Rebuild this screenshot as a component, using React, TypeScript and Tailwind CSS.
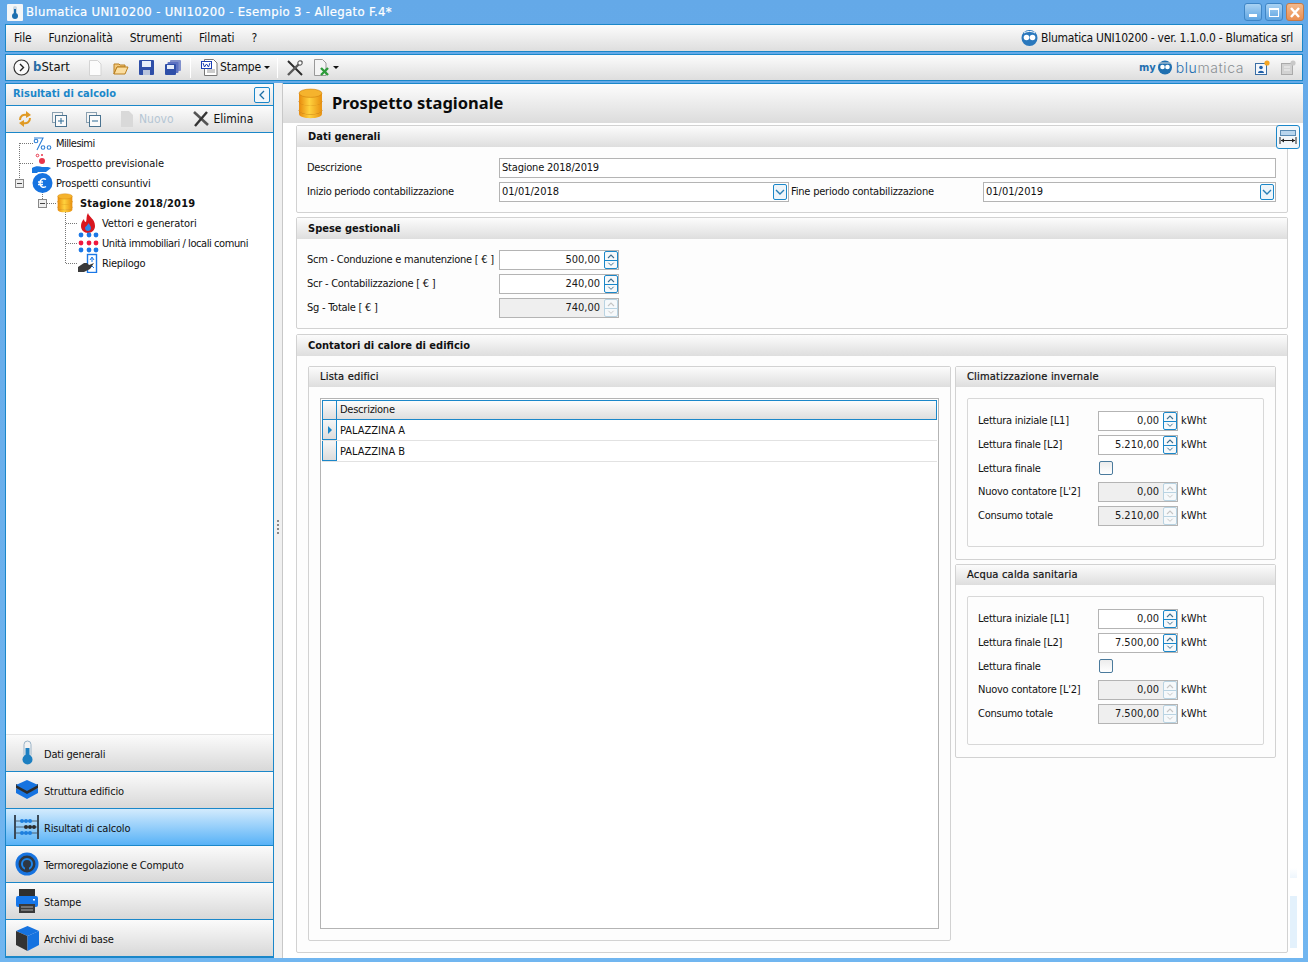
import type { ReactNode } from 'react'

const blue = '#1b87c9'

function Coins({ size = 24 }: { size?: number }) {
  return (
    <svg width={size} height={size * 1.25} viewBox="0 0 24 30">
      <defs>
        <linearGradient id="coin" x1="0" x2="1" y1="0" y2="0">
          <stop offset="0" stopColor="#e88a0c" />
          <stop offset="0.45" stopColor="#ffd23e" />
          <stop offset="1" stopColor="#e8900f" />
        </linearGradient>
      </defs>
      <path d="M1 22v3c0 2.500 5 4 11 4s11-1.500 11-4v-3z" fill="url(#coin)" />
      <ellipse cx="12" cy="21.500" rx="11" ry="3.500" fill="#fde39a" stroke="#b96f08" strokeWidth="0.800" />
      <path d="M1 13v8c0 2.500 5 4 11 4s11-1.500 11-4v-8z" fill="url(#coin)" />
      <ellipse cx="12" cy="13" rx="11" ry="3.500" fill="#fde39a" stroke="#b96f08" strokeWidth="0.800" />
      <path d="M1 5v8c0 2.500 5 4 11 4s11-1.500 11-4V5z" fill="url(#coin)" />
      <ellipse cx="12" cy="5" rx="11" ry="4" fill="#f5b32d" stroke="#c9780a" strokeWidth="0.500" />
    </svg>
  )
}

function Spinner({ disabled }: { disabled?: boolean }) {
  const c = disabled ? '#b9d3e2' : blue
  return (
    <div className="flex flex-col w-[14px] h-[18px] rounded-[2px] border bg-[#f6f9fb] shrink-0" style={{ borderColor: c }}>
      <svg viewBox="0 0 12 8" className="h-[8px] w-[12px]">
        <path d="M3 6l3-3 3 3" fill="none" stroke={disabled ? '#c5c5c5' : '#3f6f8f'} strokeWidth="1.100" />
      </svg>
      <div className="h-px" style={{ backgroundColor: c }} />
      <svg viewBox="0 0 12 8" className="h-[7px] w-[12px]">
        <path d="M3 2l3 3 3-3" fill="none" stroke={disabled ? '#c5c5c5' : '#3f6f8f'} strokeWidth="1.100" />
      </svg>
    </div>
  )
}

function NumField({ value, disabled, width }: { value: string; disabled?: boolean; width: string }) {
  return (
    <div className={`${width} h-[20px] border border-[#b4b4b4] flex items-center justify-end gap-[4px] ${disabled ? 'bg-[#efefef]' : 'bg-white'}`}>
      <span className="tracking-normal text-[#1a1a1a]">{value}</span>
      <Spinner disabled={disabled} />
    </div>
  )
}

function DateField({ value, width }: { value: string; width: string }) {
  return (
    <div className={`${width} h-[20px] border border-[#b4b4b4] bg-white flex items-center justify-between pl-[2px]`}>
      <span className="tracking-normal">{value}</span>
      <div className="w-[14px] h-[16px] mr-px border border-[#1b87c9] rounded-[2px] bg-[#eef5fa] flex items-center justify-center">
        <svg width="10" height="8" viewBox="0 0 10 8">
          <path d="M1 2l4 4 4-4" fill="none" stroke="#2a7fb6" strokeWidth="1.400" />
        </svg>
      </div>
    </div>
  )
}

function Section({ title, className, children }: { title: string; className: string; children: ReactNode }) {
  return (
    <div className={`border border-[#d2d2d2] rounded-[2px] bg-[#fdfdfd] flex flex-col ${className}`}>
      <div className="h-[21px] shrink-0 pl-[11px] flex items-center font-bold tracking-normal text-[#111] bg-[linear-gradient(#fcfcfc,#dedede)]">
        {title}
      </div>
      {children}
    </div>
  )
}

function SubSection({ title, className, children }: { title: string; className: string; children: ReactNode }) {
  return (
    <div className={`border border-[#d2d2d2] rounded-[2px] bg-[#fdfdfd] flex flex-col ${className}`}>
      <div className="h-[20px] shrink-0 pl-[11px] flex items-center font-medium tracking-[0.2px] text-[#111] [-webkit-text-stroke:0.2px_#111] bg-[linear-gradient(#fcfcfc,#dedede)]">
        {title}
      </div>
      {children}
    </div>
  )
}

function Meter({ rows }: { rows: { label: string; value?: string; disabled?: boolean }[] }) {
  return (
    <div className="mx-[11px] mt-[11px] h-[149px] border border-[#d8d8d8] rounded-[2px] pt-[12px] pl-[10px] flex flex-col gap-[4px]">
      {rows.map((r) => (
        <div key={r.label + r.value} className={`flex items-center ${r.value ? 'h-[20px]' : 'h-[19px]'}`}>
          <span className="w-[120px] shrink-0">{r.label}</span>
          {r.value ? (
            <>
              <NumField value={r.value} disabled={r.disabled} width="w-[80px]" />
              <span className="ml-[3px] tracking-normal">kWht</span>
            </>
          ) : (
            <div className="w-[14px] h-[14px] ml-px mb-[2px] border border-[#4a7a9c] rounded-[2px] bg-[linear-gradient(#ececec,#ffffff)]" />
          )}
        </div>
      ))}
    </div>
  )
}

function Tree() {
  const row = 'h-[20px] flex items-center'
  return (
    <div className="relative flex-1 bg-white pt-px">
      <svg className="absolute left-0 top-0" width="100" height="140" viewBox="6 133 100 140">
        <g stroke="#777" strokeDasharray="1 1" fill="none">
          <path d="M19.500 143V179M20 143.500H33M20 163.500H34M42.500 190V199M47 203.500H57M65.500 212V263M66 223.500H78M66 243.500H78M66 263.500H78" />
        </g>
        <g fill="#eee" stroke="#888">
          <rect x="15.500" y="179.500" width="8" height="8" />
          <rect x="38.500" y="199.500" width="8" height="8" />
        </g>
        <path d="M17 183.500h5M40 203.500h5" stroke="#444" />
        {/* per mille */}
        <g fill="none" stroke="#2c7fd6" strokeWidth="1.100">
          <path d="M34 138h9l-6 12" />
          <circle cx="36" cy="141" r="1.800" />
          <circle cx="43" cy="147.500" r="1.800" />
          <circle cx="49" cy="147.500" r="1.800" />
        </g>
        {/* prospetto previsionale */}
        <circle cx="37.500" cy="155.500" r="1.300" fill="none" stroke="#e8354a" />
        <circle cx="42" cy="155" r="1" fill="#e8354a" />
        <circle cx="42" cy="161" r="3" fill="#e8354a" />
        <path d="M32 168c3-2 7-2 10-1h6l3 1-5 4h-8l-1 1h-5z" fill="#1877e0" />
        {/* euro */}
        <circle cx="42.500" cy="183" r="10" fill="#1673e0" />
        <path d="M46 179.500c-3-2-6 0-6 3.500s3 5.500 6 3.500M38 182h5M38 184.500h5" fill="none" stroke="#fff" strokeWidth="1.400" />
        {/* flame */}
        <path d="M88 213c1 4 7 6 7 13 0 4-3 7-7 7s-7-3-7-7c0-3 1-5 3-7 0 2 1 3 2 3 1-3 0-6 2-9z" fill="#d8171f" />
        <path d="M88.500 223c1 2 2.500 3 2.500 5s-1.500 3-3 3-3-1-3-3c0-1 1-2 1.500-2 .500-1 1.500-1.500 2-3z" fill="#2f86e6" />
        {/* dots */}
        <g fill="#1b78e6">
          <circle cx="81" cy="235" r="2.400" /><circle cx="89" cy="235" r="2.400" /><circle cx="96" cy="235" r="2.400" />
          <circle cx="81" cy="250" r="2.400" /><circle cx="89" cy="250" r="2.400" /><circle cx="96" cy="250" r="2.400" />
        </g>
        <g fill="#f0173f">
          <circle cx="81" cy="243" r="2.400" /><circle cx="89" cy="243" r="2.400" /><circle cx="96" cy="243" r="2.400" />
        </g>
        {/* riepilogo */}
        <rect x="87.500" y="254.500" width="9" height="18" fill="#fff" stroke="#1b78e6" strokeWidth="1.400" />
        <path d="M90 260l2-3 2 3M92 258v4" stroke="#1b78e6" fill="none" />
        <path d="M90 268l2-2 2 2" stroke="#1b78e6" fill="none" />
        <path d="M78 272v-5l6-4h3l2 2 5-2-4 6-6 3z" fill="#3a3a3a" />
      </svg>
      <div className="relative flex flex-col">
        <div className={`${row} pl-[50px] tracking-[-0.5px]`}>Millesimi</div>
        <div className={`${row} pl-[50px] tracking-[-0.1px]`}>Prospetto previsionale</div>
        <div className={`${row} pl-[50px] tracking-[-0.15px]`}>Prospetti consuntivi</div>
        <div className={`${row} pl-[74px] font-bold tracking-[0.2px]`}>Stagione 2018/2019</div>
        <div className={`${row} pl-[96px] tracking-[-0.1px]`}>Vettori e generatori</div>
        <div className={`${row} pl-[96px] tracking-[-0.42px]`}>Unità immobiliari / locali comuni</div>
        <div className={`${row} pl-[96px] tracking-[-0.3px]`}>Riepilogo</div>
      </div>
      <div className="absolute left-[51px] top-[60px] w-[16px] h-[20px]">
        <Coins size={16} />
      </div>
    </div>
  )
}

const navIcons: Record<string, ReactNode> = {
  'Dati generali': (
    <svg width="24" height="26" viewBox="0 0 24 26">
      <rect x="9" y="1" width="7" height="17" rx="3.500" fill="#f2f2f2" stroke="#9bb4c8" />
      <circle cx="12.500" cy="19.500" r="5" fill="#1d7fc1" />
      <rect x="10.500" y="8" width="4" height="11" fill="#1d7fc1" />
    </svg>
  ),
  'Struttura edificio': (
    <svg width="24" height="22" viewBox="0 0 24 22">
      <path d="M12 14l11-5v5l-11 6-11-6V9z" fill="#1673e0" />
      <path d="M12 10l11-5v4l-11 6-11-6V5z" fill="#2b2b2b" />
      <path d="M12 1l11 5-11 6L1 6z" fill="#1673e0" />
    </svg>
  ),
  'Risultati di calcolo': (
    <svg width="26" height="25" viewBox="0 0 26 25">
      <rect x="0" y="0" width="2" height="24" fill="#3b4a58" />
      <rect x="23" y="0" width="2" height="24" fill="#3b4a58" />
      <path d="M2 6h21M2 12h21M2 18h21" stroke="#3b4a58" strokeWidth="0.800" />
      <g fill="#1d7fe0">
        <circle cx="8" cy="6" r="2" /><circle cx="12" cy="6" r="2" /><circle cx="16" cy="6" r="2" />
        <circle cx="8" cy="18" r="2" /><circle cx="12" cy="18" r="2" /><circle cx="16" cy="18" r="2" />
      </g>
      <g fill="#2b2b2b">
        <circle cx="12" cy="12" r="2" /><circle cx="16" cy="12" r="2" /><circle cx="20" cy="12" r="2" />
      </g>
    </svg>
  ),
  'Termoregolazione e Computo': (
    <svg width="24" height="24" viewBox="0 0 24 24">
      <circle cx="12" cy="12" r="11.500" fill="#1673e0" />
      <circle cx="12" cy="12" r="8.500" fill="#2e3742" />
      <circle cx="12" cy="12" r="5" fill="none" stroke="#1f86ea" strokeWidth="2" />
      <rect x="10" y="15" width="4" height="4" fill="#2e3742" />
    </svg>
  ),
  Stampe: (
    <svg width="24" height="24" viewBox="0 0 24 24">
      <rect x="4" y="0" width="16" height="8" fill="#2f2f2f" />
      <rect x="1" y="7" width="22" height="11" rx="2" fill="#1677ea" />
      <rect x="4" y="15" width="16" height="9" fill="#3a3a3a" />
      <path d="M6 18h12M6 21h12" stroke="#aaa" />
      <rect x="18" y="10" width="2" height="1.500" fill="#fff" />
    </svg>
  ),
  'Archivi di base': (
    <svg width="25" height="25" viewBox="0 0 25 25">
      <path d="M12.500 0l11.500 5-11.500 5L1 5z" fill="#1673e0" />
      <path d="M1 5l11.500 5v15L1 19z" fill="#333" />
      <path d="M24 5l-11.500 5v15L24 19z" fill="#1673e0" />
    </svg>
  ),
}

function NavButton({ label, active }: { label: string; active?: boolean }) {
  return (
    <div
      className={`h-[37px] shrink-0 border-b border-[#1b87c9] flex items-center ${
        active ? 'bg-[linear-gradient(#d3ebfd,#58b2f7)]' : 'bg-[linear-gradient(#fbfbfb,#d8d8d8)]'
      }`}
    >
      <div className="w-[38px] pl-[4px] flex justify-center shrink-0">{navIcons[label]}</div>
      <span className="pt-[3px] tracking-[-0.2px]">{label}</span>
    </div>
  )
}

function Sep() {
  return <div className="w-px h-[20px] bg-[#c4c4c4] border-r border-white" />
}

function Caret() {
  return <div className="w-0 h-0 border-x-[3px] border-x-transparent border-t-[3px] border-t-[#111]" />
}

function TopToolbar() {
  return (
    <div className="h-[27px] border border-[#1b87c9] flex items-center pl-[7px] pr-[6px] bg-[linear-gradient(#fcfcfc,#dedede)]">
      <svg width="17" height="17" viewBox="0 0 17 17" className="mr-[3px]">
        <circle cx="8.500" cy="8.500" r="7.500" fill="#fafafa" stroke="#333" strokeWidth="1.200" />
        <path d="M7 5l3.500 3.500L7 12" fill="none" stroke="#222" strokeWidth="1.400" />
      </svg>
      <span className="text-[13px] tracking-[0px] w-[55px] -mt-[2px]"><b className="text-[#2a6fa5]">b</b>Start</span>
      <svg width="14" height="16" viewBox="0 0 14 16" className="mr-[11px]">
        <path d="M1.500.500h8l3.500 3.500v11.500h-11.500z" fill="#fcfcfc" stroke="#d4d4d4" />
      </svg>
      <svg width="16" height="14" viewBox="0 0 16 14" className="mr-[10px]">
        <path d="M1 3h5l1 1h5v2H4L1 13z" fill="#f2c87c" stroke="#b97f1f" />
        <path d="M1 13l3-7h11l-3 7z" fill="#fbdd9f" stroke="#b97f1f" />
      </svg>
      <svg width="15" height="15" viewBox="0 0 15 15" className="mr-[11px]">
        <rect x="0" y="0" width="15" height="15" rx="1" fill="#2f4fa8" />
        <rect x="3" y="1" width="9" height="6" fill="#e7eefa" />
        <rect x="4" y="10" width="7" height="5" fill="#b9c4dc" />
      </svg>
      <svg width="16" height="15" viewBox="0 0 16 15" className="mr-[9px]">
        <rect x="5" y="0" width="11" height="11" rx="1" fill="#8090cc" />
        <rect x="2.500" y="2" width="11" height="11" rx="1" fill="#5d72c2" />
        <rect x="0" y="4" width="11" height="11" rx="1" fill="#2f4fa8" />
        <rect x="2" y="5" width="7" height="4" fill="#e7eefa" />
      </svg>
      <Sep />
      <svg width="17" height="17" viewBox="0 0 17 17" className="ml-[10px] mr-[2px]">
        <path d="M3.500.500h9l3.500 3.500v12.500h-12.500z" fill="#fff" stroke="#777" />
        <path d="M6 11h8M6 13h8" stroke="#999" />
        <rect x="0" y="2" width="11" height="8" fill="#1c3fb4" />
        <rect x="1" y="3" width="9" height="6" fill="#fff" />
        <path d="M2 4l1.500 4 2-3 2 3L9 4" fill="none" stroke="#1c3fb4" />
      </svg>
      <span className="mr-[3px] text-[12px] tracking-[-0.1px] -mt-[2px]">Stampe</span>
      <Caret />
      <div className="w-[7px]" />
      <Sep />
      <svg width="16" height="16" viewBox="0 0 16 16" className="ml-[9px] mr-[10px]">
        <path d="M1 1l14 14" stroke="#2c2c2c" strokeWidth="2" />
        <path d="M15 1L1 15" stroke="#5a5a5a" strokeWidth="2.400" />
        <circle cx="13" cy="3" r="2.200" fill="#fff" stroke="#444" />
      </svg>
      <svg width="18" height="18" viewBox="0 0 18 18" className="mr-[2px]">
        <path d="M1.500.500h8l3.500 3.500v12.500h-11.500z" fill="#f4f4f4" stroke="#999" />
        <path d="M8 9l7 7M15 9l-7 7" stroke="#2d9b3a" strokeWidth="2.400" />
      </svg>
      <Caret />
      <div className="ml-auto flex items-center">
        <span className="font-bold tracking-normal text-[#1f6fb0] text-[11px] mr-[2px]">my</span>
        <svg width="14" height="15" viewBox="0 0 14 15" className="mr-[4px]">
          <circle cx="7" cy="7.500" r="7" fill="#1f6fb0" />
          <circle cx="4.500" cy="7" r="2.300" fill="#fff" />
          <circle cx="9.500" cy="7" r="2.300" fill="#fff" />
          <path d="M0 3h14" stroke="#dcdcdc" />
        </svg>
        <span className="font-['Inter',sans-serif] font-light text-[14px] leading-none tracking-[0.6px] mr-[11px] [font-stretch:normal]">
          <span className="text-[#1f6fb0]">blu</span>
          <span className="text-[#8a8f94]">matica</span>
        </span>
        <svg width="15" height="16" viewBox="0 0 15 16" className="mr-[11px]">
          <rect x="0.500" y="3.500" width="11" height="11" fill="#f4f7fb" stroke="#3a6ea5" />
          <circle cx="6" cy="7.500" r="1.800" fill="#1f5fa8" />
          <path d="M3 13c0-3 6-3 6 0z" fill="#1f5fa8" />
          <circle cx="12" cy="3" r="2.600" fill="#f5a623" />
        </svg>
        <svg width="15" height="16" viewBox="0 0 15 16">
          <rect x="0.500" y="3.500" width="11" height="11" fill="#d2d2d2" stroke="#aaa" />
          <path d="M3 7h6M3 10h6" stroke="#f2f2f2" />
          <circle cx="12" cy="3" r="2.600" fill="#c8c8c8" />
        </svg>
      </div>
    </div>
  )
}

export default function App() {
  const climaRows = (l2: string, tot: string) => [
    { label: 'Lettura iniziale [L1]', value: '0,00' },
    { label: 'Lettura finale [L2]', value: l2 },
    { label: 'Lettura finale' },
    { label: "Nuovo contatore [L'2]", value: '0,00', disabled: true },
    { label: 'Consumo totale', value: tot, disabled: true },
  ]

  return (
    <div className="relative w-[1308px] h-[962px] overflow-hidden flex flex-col whitespace-nowrap bg-[linear-gradient(#64a9e8,#71b6f0)] font-['DejaVu_Sans',sans-serif] [font-stretch:condensed] text-[11px] leading-[14px] tracking-[-0.25px] text-[#111]">
      {/* title bar */}
      <div className="h-[24px] shrink-0 flex items-center pl-[7px] pr-[4px]">
        <svg width="16" height="17" viewBox="0 0 16 17" className="mr-[3px]">
          <rect width="16" height="17" rx="1" fill="#f4f6f8" />
          <rect x="6" y="2" width="4" height="9" rx="2" fill="#cbd7e2" />
          <circle cx="8" cy="12" r="3" fill="#1d6fb0" />
          <rect x="7" y="5" width="2" height="6" fill="#1d6fb0" />
        </svg>
        <span className="text-white text-[13px] font-medium tracking-[0.32px] [-webkit-text-stroke:0.2px_#fff]">
          Blumatica UNI10200 - UNI10200 - Esempio 3 - Allegato F.4*
        </span>
        <div className="ml-auto flex gap-[3px]">
          <div className="w-[18px] h-[18px] rounded-[3px] border border-[#3f86c6] bg-[linear-gradient(#a9d2f3,#5fa5e2)] flex items-end justify-center pb-[3px]">
            <div className="w-[8px] h-[3px] bg-white" />
          </div>
          <div className="w-[18px] h-[18px] rounded-[3px] border border-[#3f86c6] bg-[linear-gradient(#a9d2f3,#5fa5e2)] flex items-center justify-center">
            <div className="w-[10px] h-[9px] border border-white border-t-[2px]" />
          </div>
          <div className="w-[18px] h-[18px] rounded-[3px] border border-[#c77a45] bg-[linear-gradient(#f3b98c,#ea8f52)] flex items-center justify-center">
            <svg width="12" height="11" viewBox="0 0 12 11">
              <path d="M2 1l8 9M10 1l-8 9" stroke="#fff" strokeWidth="2.400" />
            </svg>
          </div>
        </div>
      </div>

      <div className="flex-1 min-h-0 flex flex-col gap-[2px] px-[5px] pb-[4px]">
        {/* menu */}
        <div className="h-[28px] shrink-0 border border-[#1b87c9] flex items-center pl-[8px] pr-[9px] text-[12px] bg-[linear-gradient(#fcfcfc,#dedede)]">
          <span className="mr-[17px] tracking-[-0.1px]">File</span>
          <span className="mr-[17px] tracking-[-0.05px]">Funzionalità</span>
          <span className="mr-[17px] tracking-[-0.15px]">Strumenti</span>
          <span className="mr-[17px] tracking-[-0.05px]">Filmati</span>
          <span>?</span>
          <div className="ml-auto flex items-center gap-[3px]">
            <svg width="17" height="16" viewBox="0 0 17 16">
              <circle cx="8.500" cy="8" r="8" fill="#2a78bd" />
              <circle cx="5.500" cy="7.500" r="2.800" fill="#fff" />
              <circle cx="11.500" cy="7.500" r="2.800" fill="#fff" />
              <path d="M3 3c3-2 8-2 11 0" stroke="#fff" fill="none" />
            </svg>
            <span>Blumatica UNI10200 - ver. 1.1.0.0 - Blumatica srl</span>
          </div>
        </div>

        <TopToolbar />

        <div className="flex-1 min-h-0 flex">
          {/* left panel */}
          <div className="w-[269px] shrink-0 border border-[#1b87c9] bg-white flex flex-col">
            <div className="h-[21px] shrink-0 flex items-center justify-between pl-[7px] pr-[3px] font-bold text-[#1b87c9] bg-[linear-gradient(#fcfcfc,#e4e4e4)]">
              <span className="text-[11px] tracking-normal -mt-[1px]">Risultati di calcolo</span>
              <div className="w-[16px] h-[16px] border border-[#1b87c9] rounded-[2px] bg-[#f2f7fb] flex items-center justify-center">
                <svg width="8" height="10" viewBox="0 0 8 10">
                  <path d="M6 1L2 5l4 4" fill="none" stroke="#1b6ea5" strokeWidth="1.300" />
                </svg>
              </div>
            </div>
            <div className="h-[28px] shrink-0 border-y border-[#1b87c9] flex items-center pl-[11px] bg-[linear-gradient(#fcfcfc,#e0e0e0)]">
              <svg width="16" height="16" viewBox="0 0 16 16" className="mr-[19px]">
                <g fill="none" stroke="#e09a24" strokeWidth="2">
                  <path d="M3 9c0-4 3-6 7-5" />
                  <path d="M13 7c0 4-3 6-7 5" />
                </g>
                <path d="M9 0l5 4-5 3zM7 16L2 12l5-3z" fill="#e09a24" />
              </svg>
              <svg width="15" height="15" viewBox="0 0 15 15" className="mr-[19px]">
                <rect x="0.500" y="0.500" width="10" height="10" fill="#f4f4f4" stroke="#8aa0b0" />
                <rect x="3.500" y="3.500" width="11" height="11" fill="#fafafa" stroke="#4a7390" />
                <path d="M6 9h6M9 6v6" stroke="#2c6a95" />
              </svg>
              <svg width="15" height="15" viewBox="0 0 15 15" className="mr-[19px]">
                <rect x="0.500" y="0.500" width="10" height="10" fill="#f4f4f4" stroke="#8aa0b0" />
                <rect x="3.500" y="3.500" width="11" height="11" fill="#fafafa" stroke="#4a7390" />
                <path d="M6 9h6" stroke="#2c6a95" />
              </svg>
              <svg width="14" height="16" viewBox="0 0 14 16" className="mr-[5px]">
                <path d="M1 0h8l4 4v12H1z" fill="#d9d9d9" />
              </svg>
              <span className="text-[12px] text-[#b5c6d4] mr-[19px] tracking-normal">Nuovo</span>
              <svg width="16" height="16" viewBox="0 0 16 16" className="mr-[5px]">
                <path d="M1 1l14 13" stroke="#555" strokeWidth="2.600" />
                <path d="M14 1L2 15" stroke="#333" strokeWidth="2.400" />
              </svg>
              <span className="text-[12px] tracking-normal">Elimina</span>
            </div>
            <Tree />
            <div className="border-t border-[#e4e4e4]">
              <NavButton label="Dati generali" />
              <NavButton label="Struttura edificio" />
              <NavButton label="Risultati di calcolo" active />
              <NavButton label="Termoregolazione e Computo" />
              <NavButton label="Stampe" />
              <NavButton label="Archivi di base" />
            </div>
          </div>

          {/* splitter */}
          <div className="w-[9px] shrink-0 bg-[#f0f0f0] border-r border-[#c8c8c8] flex items-center justify-center">
            <div className="flex flex-col gap-[2px] mt-[12px]">
              <div className="w-[2px] h-[2px] bg-[#888]" />
              <div className="w-[2px] h-[2px] bg-[#888]" />
              <div className="w-[2px] h-[2px] bg-[#888]" />
              <div className="w-[2px] h-[2px] bg-[#888]" />
            </div>
          </div>

          {/* content */}
          <div className="relative flex-1 min-w-0 bg-white flex flex-col">
            <div className="h-[40px] shrink-0 border-t border-[#1b87c9] bg-[linear-gradient(#fcfcfc,#dcdcdc)] flex items-center pl-[15px] gap-[9px]">
              <Coins size={25} />
              <span className="text-[16.500px] leading-[20px] -mt-[2px] tracking-normal font-bold text-[#0b0b0b] font-['Noto_Sans',sans-serif]">Prospetto stagionale</span>
            </div>

            <div className="flex-1 min-h-0 pl-[13px] pr-[15px] pt-[2px] flex flex-col gap-[4px] pb-[5px]">
              <Section title="Dati generali" className="h-[88px] shrink-0">
                <div className="pt-[11px] pl-[10px] pr-[11px] flex flex-col gap-[4px]">
                  <div className="flex items-center">
                    <span className="w-[192px] shrink-0">Descrizione</span>
                    <div className="flex-1 h-[20px] border border-[#b4b4b4] bg-white flex items-center pl-[2px] tracking-[-0.2px]">Stagione 2018/2019</div>
                  </div>
                  <div className="flex items-center">
                    <span className="w-[192px] shrink-0">Inizio periodo contabilizzazione</span>
                    <DateField value="01/01/2018" width="w-[290px]" />
                    <span className="w-[194px] shrink-0 pl-[2px] tracking-[-0.2px]">Fine periodo contabilizzazione</span>
                    <DateField value="01/01/2019" width="flex-1" />
                  </div>
                </div>
              </Section>

              <Section title="Spese gestionali" className="h-[112px] shrink-0">
                <div className="pt-[11px] pl-[10px] flex flex-col gap-[4px]">
                  <div className="flex items-center">
                    <span className="w-[192px] shrink-0">Scm - Conduzione e manutenzione [ € ]</span>
                    <NumField value="500,00" width="w-[120px]" />
                  </div>
                  <div className="flex items-center">
                    <span className="w-[192px] shrink-0">Scr - Contabilizzazione [ € ]</span>
                    <NumField value="240,00" width="w-[120px]" />
                  </div>
                  <div className="flex items-center">
                    <span className="w-[192px] shrink-0">Sg - Totale [ € ]</span>
                    <NumField value="740,00" disabled width="w-[120px]" />
                  </div>
                </div>
              </Section>

              <Section title="Contatori di calore di edificio" className="flex-1 min-h-0 mt-[1px]">
                <div className="flex-1 min-h-0 flex gap-[4px] pt-[10px] pl-[11px] pr-[11px] pb-[11px]">
                  <SubSection title="Lista edifici" className="w-[643px] shrink-0">
                    <div className="flex-1 min-h-0 mx-[11px] mt-[11px] mb-[11px] border border-[#b4b4b4] bg-white p-px">
                      <div className="h-[20px] flex border border-[#1b87c9] bg-[linear-gradient(#fcfcfc,#dedede)]">
                        <div className="w-[14px] border-r border-[#1b87c9]" />
                        <div className="pl-[3px] flex items-center">Descrizione</div>
                      </div>
                      {['PALAZZINA A', 'PALAZZINA B'].map((name, i) => (
                        <div key={name} className="h-[21px] flex border-b border-[#e2e2e2]">
                          <div className="w-[15px] shrink-0 border-x border-b border-[#1b87c9] flex items-center justify-center bg-[linear-gradient(#f6f6f6,#dcdcdc)]">
                            {i === 0 && <div className="w-0 h-0 border-y-[4px] border-y-transparent border-l-[4px] border-l-[#1b87c9]" />}
                          </div>
                          <div className="pl-[3px] pt-px flex items-center tracking-normal">{name}</div>
                        </div>
                      ))}
                    </div>
                  </SubSection>

                  <div className="flex-1 flex flex-col gap-[4px]">
                    <SubSection title="Climatizzazione invernale" className="h-[194px] shrink-0">
                      <Meter rows={climaRows('5.210,00', '5.210,00')} />
                    </SubSection>
                    <SubSection title="Acqua calda sanitaria" className="h-[194px] shrink-0">
                      <Meter rows={climaRows('7.500,00', '7.500,00')} />
                    </SubSection>
                  </div>
                </div>
              </Section>
            </div>

            {/* floating resize button */}
            <div className="absolute left-[993px] top-[42px] w-[24px] h-[24px] rounded-[3px] border border-[#1b87c9] bg-[#f2f6f9] flex items-center justify-center">
              <svg width="18" height="16" viewBox="0 0 18 16">
                <rect x="1.500" y="1.500" width="15" height="5" fill="#b9d6ee" stroke="#5a8cb5" />
                <path d="M1 8v7M17 8v7M2 11.500h14" stroke="#222" />
                <path d="M2 11.500l3-2v4zM16 11.500l-3-2v4z" fill="#222" />
              </svg>
            </div>
            {/* faded scroll hint */}
            <div className="absolute left-[1007px] top-[813px] w-[7px] h-[52px] bg-[#e3f1fc]" />
            <div className="absolute left-[1007px] top-[785px] w-[7px] h-[10px] bg-[linear-gradient(#ffffff,#eef6fd)]" />
          </div>
        </div>
      </div>
    </div>
  )
}
